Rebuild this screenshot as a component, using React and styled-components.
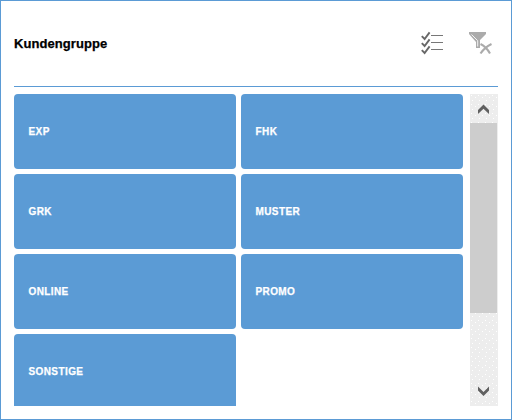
import React from "react";
import styled, { createGlobalStyle } from "styled-components";

const GlobalStyle = createGlobalStyle`
  * { box-sizing: border-box; }
  body { margin: 0; background: #fff; }
`;

const Panel = styled.section`
  width: 512px;
  height: 420px;
  padding: 0 13px 13px;
  border: 1px solid #5b9bd5;
  background: #fff;
  display: flex;
  flex-direction: column;
  overflow: hidden;
  font-family: "Liberation Sans", Arial, sans-serif;
`;

const Header = styled.header`
  height: 86px;
  flex: none;
  display: flex;
  align-items: center;
  justify-content: space-between;
  border-bottom: 1px solid #5b9bd5;
`;

const Title = styled.h1`
  margin: 0;
  font-size: 13px;
  line-height: 16px;
  font-weight: 700;
  letter-spacing: 0.07px;
  -webkit-text-stroke: 0.25px #000;
  color: #000;
`;

const Actions = styled.div`
  display: flex;
  gap: 24px;
  padding: 0 5px 2px 0;
`;

const IconButton = styled.button`
  width: 24px;
  height: 24px;
  padding: 0;
  border: 0;
  background: none;
  svg { display: block; }
`;

const Body = styled.div`
  flex: 1;
  min-height: 0;
  margin-top: 7px;
  display: flex;
  justify-content: space-between;
`;

const Tiles = styled.div`
  height: 312px;
  overflow: hidden;
  display: grid;
  grid-template-columns: 222px 222px;
  grid-auto-rows: 75px;
  gap: 5px;
`;

const Tile = styled.button`
  border: 0;
  border-radius: 4px;
  padding: 1px 14px 0 14.5px;
  background: #5b9bd5;
  color: #fff;
  font: 700 10px/14px "Liberation Sans", Arial, sans-serif;
  letter-spacing: 0.4px;
  -webkit-text-stroke: 0.25px #fff;
  text-align: left;
`;

const ScrollBar = styled.div`
  width: 28px;
  height: 312px;
  display: flex;
  flex-direction: column;
  background-color: #ededed;
  background-image:
    radial-gradient(circle at 1.5px 1.5px, #fff 0.7px, transparent 0.9px),
    radial-gradient(circle at 5.5px 3.5px, #fff 0.7px, transparent 0.9px),
    radial-gradient(circle at 2.5px 6.5px, #fff 0.7px, transparent 0.9px);
  background-size: 7px 9px;
`;

const ScrollArrow = styled.div`
  height: 29px;
  flex: none;
  display: flex;
  svg { display: block; }
`;

const Track = styled.div`
  flex: 1;
`;

const Thumb = styled.div`
  width: 27px;
  height: 190px;
  background: #cdcdcd;
`;

const MultiSelectIcon = () => (
  <svg width="24" height="24" viewBox="0 0 24 24" fill="none">
    {[0, 7, 14].map((y) => (
      <g key={y} transform={`translate(0 ${y})`}>
        <path d="M0.8 5.2 3.6 8 8.6 1.4" stroke="#686868" strokeWidth="1.9" />
        <path d="M10 4.5H22" stroke="#777" />
      </g>
    ))}
  </svg>
);

const ClearFilterIcon = () => (
  <svg width="24" height="24" viewBox="0 0 24 24" fill="none">
    <path d="M0 1H17V3L11 9V17H7V11L0 3Z" fill="#ababab" />
    <path d="M2.5 3.5 8.7 9.7V15.5" stroke="#f3f3f3" />
    <path d="M11.5 13C14.5 14.5 18.5 18 21 22.5M22.5 13C18.5 15 14.5 18 11.5 22.5" stroke="#ababab" strokeWidth="2.1" />
  </svg>
);

const Chevron = ({ down = false }) => (
  <svg width="28" height="29" viewBox="0 0 28 29" fill="#606060">
    {down ? (
      <path d="M8 9.5 13.5 15 19 9.5V13.5L13.5 19 8 13.5Z" />
    ) : (
      <path d="M8 20V16L13.5 10.5 19 16V20L13.5 14.8Z" />
    )}
  </svg>
);

const groups = ["EXP", "FHK", "GRK", "MUSTER", "ONLINE", "PROMO", "SONSTIGE"];

export default function App() {
  return (
    <>
      <GlobalStyle />
      <Panel>
        <Header>
          <Title>Kundengruppe</Title>
          <Actions>
            <IconButton aria-label="Mehrfachauswahl"><MultiSelectIcon /></IconButton>
            <IconButton aria-label="Filter löschen"><ClearFilterIcon /></IconButton>
          </Actions>
        </Header>
        <Body>
          <Tiles>
            {groups.map((name) => <Tile key={name}>{name}</Tile>)}
          </Tiles>
          <ScrollBar>
            <ScrollArrow><Chevron /></ScrollArrow>
            <Track><Thumb /></Track>
            <ScrollArrow><Chevron down /></ScrollArrow>
          </ScrollBar>
        </Body>
      </Panel>
    </>
  );
}
